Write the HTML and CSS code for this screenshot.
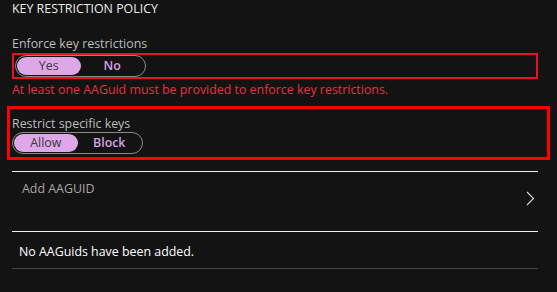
FILE: index.html
```html
<!DOCTYPE html>
<html lang="en">
<head>
  <meta charset="UTF-8">
  <title>Key restriction policy</title>
  <link rel="stylesheet" href="styles.css">
</head>
<body>
  <div class="panel">
    <h2 class="section-title">KEY RESTRICTION POLICY</h2>

    <div class="field">
      <div class="field-label">Enforce key restrictions</div>
      <div class="highlight thin">
        <div class="pill">
          <span class="seg active">Yes</span>
          <span class="seg">No</span>
        </div>
      </div>
      <div class="error">At least one AAGuid must be provided to enforce key restrictions.</div>
    </div>

    <div class="highlight thick">
      <div class="field-label">Restrict specific keys</div>
      <div class="pill">
        <span class="seg active">Allow</span>
        <span class="seg">Block</span>
      </div>
    </div>

    <div class="add-row">
      <span class="add-label">Add AAGUID</span>
      <svg class="chevron" width="9" height="15" viewBox="0 0 9 15">
        <path d="M1 1 L7.5 7.5 L1 14" fill="none" stroke="#d0d0d0" stroke-width="1.2"/>
      </svg>
    </div>

    <div class="empty-row">No AAGuids have been added.</div>
  </div>
</body>
</html>
```

FILE: styles.css
```css
* {
  margin: 0;
  padding: 0;
  box-sizing: border-box;
}
body {
  background: #131313;
  font-family: 'Open Sans', 'Liberation Sans', sans-serif;
  color: #e6e6e6;
  width: 557px;
  height: 292px;
  overflow: hidden;
}
.panel {
  padding: 0 19px 0 12px;
}
.section-title {
  font-size: 12.4px;
  font-weight: normal;
  line-height: 16px;
  color: #ececec;
  padding-top: 1px;
}
.field {
  margin-top: 18px;
}
.field-label {
  font-size: 12.4px;
  line-height: 17px;
  color: #bdbdbd;
}
.highlight.thin {
  margin-top: 1px;
  width: 526px;
  height: 26px;
  border: 2px solid #e81123;
  padding: 0 1px;
}
.highlight.thick {
  margin: 8px 0 0 -5px;
  width: 543px;
  height: 54px;
  border: 3px solid #ff0000;
  padding: 6px 0 0 2px;
}
.pill {
  display: flex;
  align-items: center;
  width: 131px;
  height: 22px;
  border: 1px solid #8a8a8a;
  border-radius: 11px;
  padding: 1px;
}
.seg {
  flex: 1;
  height: 18px;
  line-height: 18px;
  text-align: center;
  font-size: 12.4px;
  font-weight: 600;
  color: #d7a1e6;
  border-radius: 9px;
}
.seg.active {
  background: #dda7e8;
  color: #3a3a3a;
  font-weight: normal;
}
.error {
  font-size: 12.4px;
  line-height: 17px;
  color: #e8313f;
  margin-top: 2px;
}
.add-row {
  margin-top: 11px;
  border-top: 1px solid #f0f0f0;
  height: 60px;
  display: flex;
  justify-content: space-between;
  padding: 9px 3px 0 10px;
}
.add-label {
  font-size: 12.4px;
  line-height: 16px;
  color: #a8a8a8;
}
.chevron {
  margin-top: 10px;
}
.empty-row {
  border-top: 1px solid #f0f0f0;
  border-bottom: 1px solid #454545;
  font-size: 12.4px;
  line-height: 16px;
  padding: 12px 0 8px 7px;
  color: #ffffff;
  font-weight: 500;
  width: 526px;
}
```
